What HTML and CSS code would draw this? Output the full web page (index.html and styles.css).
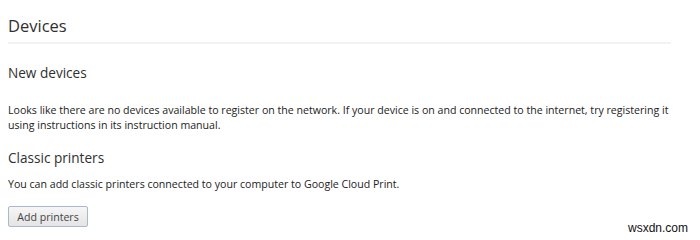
FILE: index.html
```html
<!DOCTYPE html>
<html lang="en">
<head>
    <meta charset="UTF-8">
    <title>Devices</title>
    <link rel="stylesheet" href="styles.css">
</head>
<body>
<div class="pagina">
    <h1 class="titulo">Devices</h1>
    <div class="seccion">
        <h2 class="subtitulo">New devices</h2>
        <p class="texto">Looks like there are no devices available to register on the network. If your device is on and connected to the internet, try registering it using instructions in its instruction manual.</p>
    </div>
    <div class="seccion">
        <h2 class="subtitulo clasicas">Classic printers</h2>
        <p class="texto">You can add classic printers connected to your computer to Google Cloud Print.</p>
        <button class="boton">Add printers</button>
    </div>
</div>
<div class="marca">wsxdn.com</div>
</body>
</html>
```

FILE: styles.css
```css
body {
    margin: 0;
    font-family: "Open Sans", "Noto Sans", Arial, sans-serif;
    color: #303030;
    background: #fff;
    width: 700px;
    height: 240px;
    overflow: hidden;
    position: relative;
}
.pagina {
    padding: 0 29px 0 8px;
}
.titulo {
    margin: 0;
    padding-top: 16px;
    padding-bottom: 6px;
    font-size: 16.5px;
    font-weight: normal;
    line-height: 20px;
    border-bottom: 2px solid #f2f2f2;
}
.subtitulo {
    margin: 19px 0 0;
    font-size: 13.6px;
    font-weight: normal;
    line-height: 20px;
}
.clasicas {
    margin-top: 15px;
}
.texto {
    margin: 20px 0 0;
    font-size: 10.6px;
    line-height: 15px;
    color: #222;
}
.seccion .clasicas + .texto {
    margin-top: 9px;
}
.boton {
    display: block;
    margin-top: 14px;
    width: 80px;
    height: 21px;
    padding: 0;
    font-family: inherit;
    font-size: 10.6px;
    color: #444;
    border: 1px solid #a9b7cf;
    border-radius: 2px;
    background: linear-gradient(#f6f6f6, #e4e4e4);
}
.marca {
    position: absolute;
    right: 12px;
    bottom: 5px;
    font-family: "Liberation Sans", Arial, sans-serif;
    font-size: 12px;
    color: #111;
}
```
